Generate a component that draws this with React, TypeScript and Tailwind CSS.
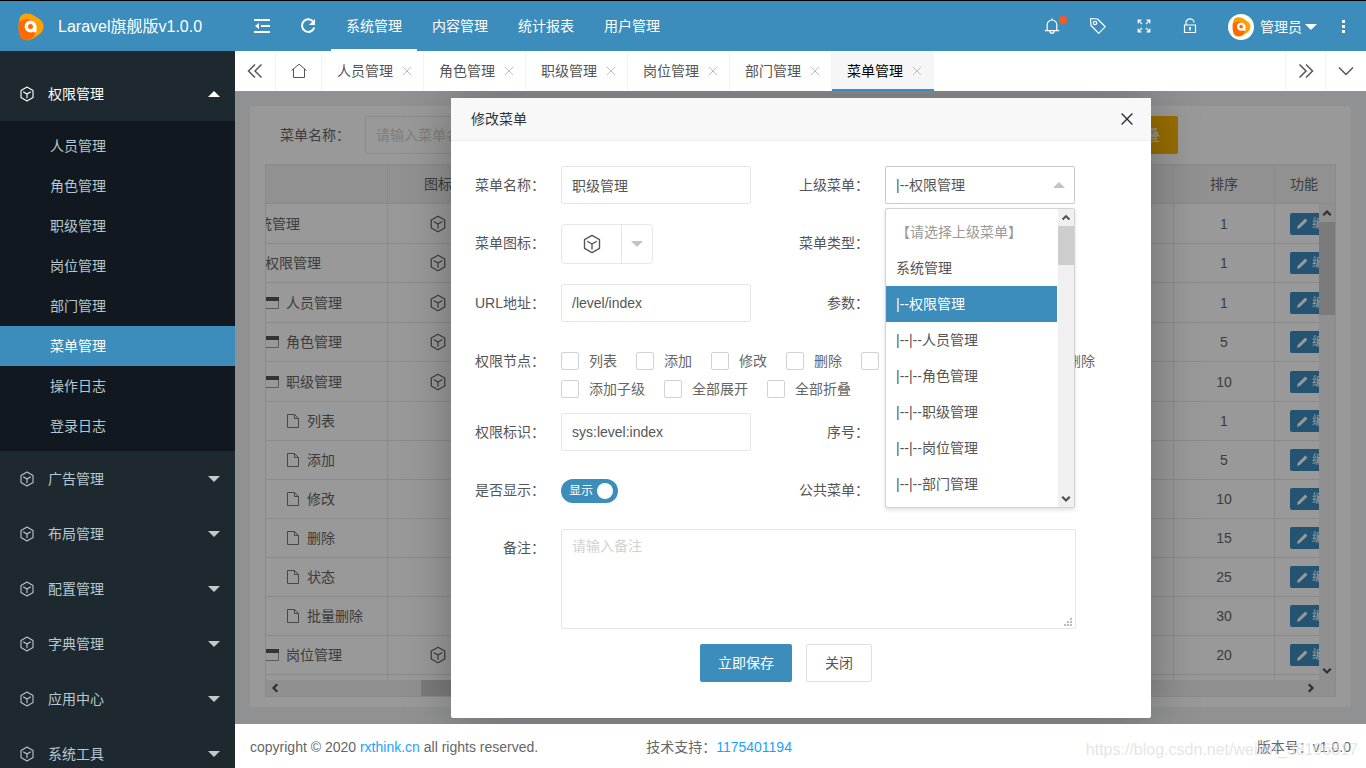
import { useState } from "react";
import type { ReactNode } from "react";

type MenuRow = {
  name: string;
  level: number;
  sort: number;
  icon?: boolean;
};

const topMenus = ["系统管理", "内容管理", "统计报表", "用户管理"];
const subMenus = ["人员管理", "角色管理", "职级管理", "岗位管理", "部门管理", "菜单管理", "操作日志", "登录日志"];
const sideMenus = ["广告管理", "布局管理", "配置管理", "字典管理", "应用中心", "系统工具"];
const tabs = ["人员管理", "角色管理", "职级管理", "岗位管理", "部门管理", "菜单管理"];

const rows: MenuRow[] = [
  { name: "系统管理", level: 0, sort: 1, icon: true },
  { name: "权限管理", level: 1, sort: 1, icon: true },
  { name: "人员管理", level: 2, sort: 1, icon: true },
  { name: "角色管理", level: 2, sort: 5, icon: true },
  { name: "职级管理", level: 2, sort: 10, icon: true },
  { name: "列表", level: 3, sort: 1 },
  { name: "添加", level: 3, sort: 5 },
  { name: "修改", level: 3, sort: 10 },
  { name: "删除", level: 3, sort: 15 },
  { name: "状态", level: 3, sort: 25 },
  { name: "批量删除", level: 3, sort: 30 },
  { name: "岗位管理", level: 2, sort: 20, icon: true },
  { name: "列表", level: 3, sort: 1 },
];

const indents = ["pl-[21px]", "pl-[42px]", "pl-[63px]", "pl-[84px]"];

const nodes = ["列表", "添加", "修改", "删除", "状态", "查看", "批量删除", "添加子级", "全部展开", "全部折叠"];

const parents = [
  "【请选择上级菜单】",
  "系统管理",
  "|--权限管理",
  "|--|--人员管理",
  "|--|--角色管理",
  "|--|--职级管理",
  "|--|--岗位管理",
  "|--|--部门管理",
];

const inputClass = "h-[38px] w-full rounded-xs border border-[#e6e6e6] bg-white px-[10px] text-[#555] outline-none placeholder:text-[#d2d2d2]";

function CubeIcon({ className }: { className: string }) {
  return (
    <svg viewBox="0 0 16 16" className={className} fill="none" stroke="currentColor" strokeWidth="1.1">
      <path d="M8 1.1 14 4.500v7L8 14.900 2 11.500v-7z" strokeLinejoin="round" />
      <path d="M4.200 5.800 8 8l3.800-2.200M8 8v4.300" />
    </svg>
  );
}

function Caret({ className, up }: { className: string; up?: boolean }) {
  return (
    <svg viewBox="0 0 12 6" className={className} fill="currentColor">
      <path d={up ? "M0 6 6 0l6 6z" : "M0 0h12L6 6z"} />
    </svg>
  );
}

function Chevron({ className, d }: { className: string; d: string }) {
  return (
    <svg viewBox="0 0 16 16" className={className} fill="none" stroke="currentColor">
      <path d={d} />
    </svg>
  );
}

function Logo({ className }: { className: string }) {
  return (
    <svg viewBox="0 0 26 28" className={className}>
      <path d="M3 2.500C7-.5 12 0 16 2.500l6 4c4 3 4.500 8 2 12-2.500 3.500-6 5-9 7-4 2.500-9 2.500-12-1C-.5 20 0 7 3 2.500z" fill="#ffa200" />
      <path d="M1 9c4-3 10-4 14-1 5 4 4 12-1 17.500-4 2.500-8.500 2-11-1C.5 21 .5 14 1 9z" fill="#ff6a00" />
      <circle cx="12.500" cy="13.500" r="4.200" fill="none" stroke="#fff" strokeWidth="3.400" />
      <path d="M15.500 13h3v6.300h-3z" fill="#fff" />
    </svg>
  );
}

function FileIcon() {
  return (
    <svg viewBox="0 0 14 16" className="h-4 w-[14px]" fill="none" stroke="#777">
      <path d="M1.500 1.500h7l4 4v9h-11z" />
      <path d="M8.500 1.500v4h4" />
    </svg>
  );
}

function WindowIcon() {
  return (
    <svg viewBox="0 0 14 12" className="h-3 w-[14px]">
      <path d="M.5.500h13v11H.5z" fill="none" stroke="#999" />
      <path d="M0 0h14v4H0z" fill="#555" />
    </svg>
  );
}

function Field({ label, htmlFor, children }: { label: string; htmlFor: string; children: ReactNode }) {
  return (
    <>
      <label htmlFor={htmlFor} className="pr-4 text-right leading-[38px]">
        {label}：
      </label>
      <div className="relative">{children}</div>
    </>
  );
}

function Switch({ id }: { id: string }) {
  return (
    <div className="flex h-10 items-center">
      <label htmlFor={id} className="flex h-6 w-[57px] cursor-pointer items-center justify-between rounded-full bg-[#3c8dbc] pr-[5px] pl-2 text-xs text-white">
        <input id={id} type="checkbox" defaultChecked className="sr-only" />
        显示
        <span className="size-4 rounded-full bg-white" />
      </label>
    </div>
  );
}

function Header() {
  return (
    <header className="flex h-[51px] shrink-0 border-t border-black bg-[#3c8dbc] text-sm text-white">
      <a href="#" className="flex w-[235px] items-center gap-[14px] pt-[2px] pl-[18px] text-base">
        <Logo className="h-[28px] w-[26px]" />
        <span>Laravel旗舰版v1.0.0</span>
      </a>
      <button aria-label="折叠菜单" className="flex w-[54px] items-center justify-center">
        <svg viewBox="0 0 16 14" className="h-[14px] w-4" fill="none" stroke="#fff" strokeWidth="2">
          <path d="M0 1h16M7 7h9M0 13h16" />
          <path d="M5 4v6L1 7z" fill="#fff" stroke="none" />
        </svg>
      </button>
      <button aria-label="刷新" className="mr-[4px] flex w-[38px] items-center justify-center">
        <svg viewBox="0 0 16 16" className="size-4" fill="none" stroke="#fff" strokeWidth="2">
          <path d="M13.500 4A6.300 6.300 0 1 0 14.300 9.500" />
          <path d="M15 1v6H9z" fill="#fff" stroke="none" />
        </svg>
      </button>
      <nav className="flex">
        {topMenus.map((name, i) => (
          <a
            key={name}
            href="#"
            className={
              i === 0
                ? "flex items-center border-b-2 border-white px-[15px] pt-[2px]"
                : "flex items-center border-b-2 border-transparent px-[15px] pt-[2px]"
            }
          >
            {name}
          </a>
        ))}
      </nav>
      <div className="ml-auto flex">
        <button aria-label="消息" className="relative flex w-[46px] items-center justify-center">
          <svg viewBox="0 0 16 16" className="size-4" fill="none" stroke="#fff" strokeWidth="1.200">
            <path d="M3.200 12.500V6.800a4.800 4.800 0 0 1 9.600 0v5.700M.8 12.600h14.400M6 13.200a2 2 0 0 0 4 0M8 .6V2" />
          </svg>
          <span className="absolute top-[15px] right-2 size-2 rounded-full bg-[#ff5722]" />
        </button>
        <button aria-label="便签" className="flex w-[46px] items-center justify-center">
          <svg viewBox="0 0 18 18" className="size-[18px]" fill="none" stroke="#fff" strokeWidth="1.200">
            <path d="M1.500 2.500Q1.500 1.500 2.500 1.500L8.500 2l7.800 7.700-6.600 6.600L2 8.500z" strokeLinejoin="round" />
            <circle cx="6" cy="6" r="1.700" />
          </svg>
        </button>
        <button aria-label="全屏" className="flex w-[46px] items-center justify-center">
          <svg viewBox="0 0 14 14" className="size-[14px]" fill="none" stroke="#fff" strokeWidth="1.200">
            <path d="M1.200 4.500V1.200h3.300M1.200 1.200l3.800 3.800M9.500 1.200h3.300v3.300M12.800 1.200 9 5M1.200 9.500v3.300h3.300M1.200 12.800 5 9M12.800 9.500v3.300H9.500M12.800 12.800 9 9" />
          </svg>
        </button>
        <button aria-label="锁屏" className="flex w-[46px] items-center justify-center">
          <svg viewBox="0 0 14 16" className="h-4 w-[14px]" fill="none" stroke="#fff" strokeWidth="1.200">
            <path d="M1.500 7h11v7.500h-11zM3 7V4.500a4 3.600 0 0 1 8 0" />
            <path d="M7 9v3.500M6 9.800h2" strokeWidth="1.600" />
          </svg>
        </button>
        <button className="flex w-[107px] items-center pt-[2px] pl-[15px]">
          <span className="flex size-[26px] items-center justify-center rounded-full bg-white">
            <Logo className="h-5 w-[19px]" />
          </span>
          <span className="ml-[6px]">管理员</span>
          <Caret className="ml-[3px] h-[6px] w-3" />
        </button>
        <button aria-label="更多" className="flex w-[46px] items-center justify-center">
          <svg viewBox="0 0 3 13" className="h-[13px] w-[3px]" fill="#fff">
            <path d="M0 0h3v3H0zM0 5h3v3H0zM0 10h3v3H0z" />
          </svg>
        </button>
      </div>
    </header>
  );
}

function Sidebar() {
  return (
    <aside className="w-[235px] shrink-0 overflow-hidden bg-[#1e292f] pt-[15px] text-sm text-[#b8c7ce]">
      <a href="#" className="flex h-[55px] items-center pr-[15px] pl-[19px] text-white">
        <CubeIcon className="size-4" />
        <span className="ml-[13px] flex-1">权限管理</span>
        <Caret up className="h-[6px] w-3" />
      </a>
      <ul className="bg-[#11181f] py-[5px]">
        {subMenus.map((name) => (
          <li key={name}>
            <a
              href="#"
              className={name === "菜单管理" ? "block bg-[#3c8dbc] pl-[50px] leading-10 text-white" : "block pl-[50px] leading-10"}
            >
              {name}
            </a>
          </li>
        ))}
      </ul>
      {sideMenus.map((name) => (
        <a key={name} href="#" className="flex h-[55px] items-center pr-[15px] pl-[19px]">
          <CubeIcon className="size-4" />
          <span className="ml-[13px] flex-1">{name}</span>
          <Caret className="h-[6px] w-3 text-[#c4cacc]" />
        </a>
      ))}
    </aside>
  );
}

function TabBar() {
  return (
    <div className="flex h-10 shrink-0 bg-white text-sm text-[#555]">
      <button aria-label="向左滚动" className="flex w-[41px] items-center justify-center border-r border-[#f3f3f3]">
        <Chevron className="size-4 stroke-[1.5]" d="M8 1.500 1.500 8 8 14.500M14.500 1.500 8 8l6.500 6.500" />
      </button>
      <button aria-label="首页" className="flex w-[46px] items-center justify-center border-r border-[#f3f3f3]">
        <Chevron className="size-4" d="M.5 7.500 8 1.200l7.500 6.300M2.500 6v8.500h11V6" />
      </button>
      {tabs.map((name) => (
        <div
          key={name}
          className={
            name === "菜单管理"
              ? "flex w-[102px] items-center border-b-2 border-[#3c8dbc] bg-[#f6f6f6] pt-[2px] pl-[15px] text-black"
              : "flex w-[102px] items-center border-r border-[#f3f3f3] pl-[15px]"
          }
        >
          <a href="#">{name}</a>
          <button aria-label={`关闭${name}`} className="ml-[9px] text-[#bbb]">
            <Chevron className="size-[10px] stroke-[1.5]" d="M1.500 1.500l13 13M14.500 1.500l-13 13" />
          </button>
        </div>
      ))}
      <button aria-label="向右滚动" className="ml-auto flex w-[41px] items-center justify-center border-x border-[#f3f3f3]">
        <Chevron className="size-4 stroke-[1.5]" d="M1.500 1.500 8 8l-6.500 6.500M8 1.500 14.500 8 8 14.500" />
      </button>
      <button aria-label="页签操作" className="flex w-10 items-center justify-center">
        <Chevron className="size-4 stroke-[1.5]" d="M1 4.500l7 7 7-7" />
      </button>
    </div>
  );
}

function MenuTable() {
  const cell = "border-r border-b border-[#e6e6e6]";
  return (
    <div className="flex min-h-0 flex-1 flex-col border border-[#e6e6e6]">
      <div className="flex min-h-0 flex-1">
        <div className="min-w-0 flex-1 overflow-hidden">
          <table className="-ml-16 w-[calc(100%+220px)] table-fixed border-separate border-spacing-0 text-sm">
            <thead>
              <tr className="h-[39px] bg-[#f2f2f2]">
                <th className={`w-[186px] ${cell}`} />
                <th className={`w-[101px] font-normal ${cell}`}>图标</th>
                <th className={cell} />
                <th className={`w-[101px] font-normal ${cell}`}>公共菜单</th>
                <th className={`w-[101px] font-normal ${cell}`}>排序</th>
                <th className={`w-[200px] pl-[15px] text-left font-normal ${cell}`}>功能操作</th>
              </tr>
            </thead>
            <tbody>
              {rows.map((row, i) => (
                <tr key={i} className={row.icon && i % 2 === 0 ? "h-10" : "h-[39px]"}>
                  <td className={`p-0 ${indents[row.level]} ${cell}`}>
                    <div className="flex items-center">
                      <span className="flex w-[21px]">
                        {row.level === 3 ? <FileIcon /> : <WindowIcon />}
                      </span>
                      {row.name}
                    </div>
                  </td>
                  <td className={`p-0 ${cell}`}>{row.icon && <CubeIcon className="mx-auto size-[18px]" />}</td>
                  <td className={cell} />
                  <td className={cell} />
                  <td className={`p-0 text-center ${cell}`}>{row.sort}</td>
                  <td className={`p-0 pl-[15px] ${cell}`}>
                    <button className="flex h-[22px] items-center gap-1 rounded-xs bg-[#3c8dbc] px-[7px] text-xs text-white">
                      <svg viewBox="0 0 10 10" className="size-[11px]" fill="#fff">
                        <path d="M0 10l.6-2.800L7.500.500l2 2L2.600 9.200z" />
                      </svg>
                      编辑
                    </button>
                  </td>
                </tr>
              ))}
            </tbody>
          </table>
        </div>
        <div className="flex w-4 flex-col items-center bg-[#f0f0f0] text-[#505050]">
          <div className="h-[39px] w-full shrink-0 border-b border-[#e6e6e6] bg-[#f2f2f2]" />
          <Chevron className="my-[3px] h-3 w-3 stroke-3" d="M3 11l5-5 5 5" />
          <div className="h-[93px] w-full bg-[#cdcdcd]" />
          <Chevron className="mt-auto mb-[3px] h-3 w-3 stroke-3" d="M3 5l5 5 5-5" />
        </div>
      </div>
      <div className="flex h-4 shrink-0 items-center bg-[#f0f0f0] pr-[18px] pl-[3px] text-[#505050]">
        <Chevron className="size-3 stroke-3" d="M11 3 6 8l5 5" />
        <div className="ml-[140px] h-full w-[500px] bg-[#cdcdcd]" />
        <Chevron className="ml-auto size-3 stroke-3" d="M5 3l5 5-5 5" />
      </div>
    </div>
  );
}

function MenuPage() {
  return (
    <div className="flex h-full flex-col px-[15px] pt-[15px] pb-[17px]">
      <div className="flex min-h-0 flex-1 flex-col gap-[10px] rounded-xs bg-white px-[15px] py-[10px]">
        <div className="flex items-center justify-between pr-[158px] pl-[15px]">
          <div className="flex items-center">
            <label htmlFor="keyword" className="pr-[15px]">
              菜单名称：
            </label>
            <div className="w-[190px]">
              <input id="keyword" placeholder="请输入菜单名称" className={inputClass} />
            </div>
          </div>
          <button className="h-[38px] rounded-xs bg-[#ffb800] px-[18px] text-white">全部折叠</button>
        </div>
        <MenuTable />
      </div>
    </div>
  );
}

function ParentSelect() {
  const [selected, setSelected] = useState("|--权限管理");

  return (
    <>
      <select
        id="parent"
        value={selected}
        onChange={(e) => setSelected(e.target.value)}
        className="h-[38px] w-full appearance-none rounded-xs border border-[#c9c9c9] bg-white px-[10px] text-[#555] outline-none"
      >
        {parents.map((name) => (
          <option key={name}>{name}</option>
        ))}
      </select>
      <Caret up className="pointer-events-none absolute top-4 right-[10px] h-[6px] w-3 text-[#c2c2c2]" />
      <div className="absolute top-[42px] left-0 z-10 flex h-[300px] w-full rounded-xs border border-[#d2d2d2] bg-white shadow-[0_2px_4px_rgba(0,0,0,0.12)]">
        <ul role="listbox" className="min-w-0 flex-1 overflow-hidden py-[5px]">
          {parents.map((name, i) => (
            <li
              key={name}
              role="option"
              aria-selected={name === selected}
              onClick={() => setSelected(name)}
              className={
                name === selected
                  ? "bg-[#3c8dbc] px-[10px] leading-9 text-white"
                  : i === 0
                    ? "px-[10px] leading-9 text-[#999]"
                    : "px-[10px] leading-9"
              }
            >
              {name}
            </li>
          ))}
        </ul>
        <div className="flex w-[17px] flex-col items-center border-l border-white bg-[#f0f0f0] text-[#505050]">
          <Chevron className="my-[3px] h-[11px] w-3 stroke-3" d="M3 11l5-5 5 5" />
          <div className="h-[39px] w-full bg-[#cdcdcd]" />
          <Chevron className="mt-auto mb-[2px] h-3 w-3 stroke-3" d="M3 5l5 5 5-5" />
        </div>
      </div>
    </>
  );
}

function EditDialog() {
  return (
    <div role="dialog" aria-label="修改菜单" className="flex h-[620px] w-[700px] flex-col rounded-xs bg-white text-sm text-[#555] shadow-[1px_1px_50px_rgba(0,0,0,0.3)]">
      <div className="flex h-[43px] items-center justify-between border-b border-[#eee] bg-[#f8f8f8] pr-[18px] pl-5">
        <h2 className="text-[#333]">修改菜单</h2>
        <button aria-label="关闭窗口" className="text-[#2e2d3c]">
          <Chevron className="size-3 stroke-[1.8]" d="M.8.800l14.400 14.400M15.200.800.800 15.200" />
        </button>
      </div>
      <form className="pt-[25px] pr-[30px]" onSubmit={(e) => e.preventDefault()}>
        <div className="grid grid-cols-[110px_190px_134px_190px] gap-y-5">
          <Field label="菜单名称" htmlFor="name">
            <input id="name" defaultValue="职级管理" className={inputClass} />
          </Field>
          <Field label="上级菜单" htmlFor="parent">
            <ParentSelect />
          </Field>
          <Field label="菜单图标" htmlFor="icon">
            <button id="icon" type="button" aria-label="选择图标" className="flex h-10 w-[92px] items-center rounded-sm border border-[#e6e6e6]">
              <span className="flex h-full w-[60px] items-center justify-center border-r border-[#e6e6e6]">
                <CubeIcon className="size-5" />
              </span>
              <Caret className="mx-auto h-[6px] w-3 text-[#c2c2c2]" />
            </button>
          </Field>
          <Field label="菜单类型" htmlFor="type">
            <select id="type" className={inputClass} />
          </Field>
          <Field label="URL地址" htmlFor="url">
            <input id="url" defaultValue="/level/index" className={inputClass} />
          </Field>
          <Field label="参数" htmlFor="param">
            <input id="param" className={inputClass} />
          </Field>
        </div>
        <fieldset className="mt-5 mb-[10px] flex">
          <legend className="float-left w-[110px] shrink-0 pr-4 text-right leading-[38px]">权限节点：</legend>
          <div className="flex flex-wrap gap-x-[19px] pt-[5px]">
            {nodes.map((name) => (
              <label key={name} className="flex h-7 items-center gap-[10px] text-[#666]">
                <input type="checkbox" className="size-[18px] appearance-none rounded-xs border border-[#d2d2d2] bg-white" />
                {name}
              </label>
            ))}
          </div>
        </fieldset>
        <div className="grid grid-cols-[110px_190px_134px_190px]">
          <Field label="权限标识" htmlFor="permission">
            <input id="permission" defaultValue="sys:level:index" className={inputClass} />
          </Field>
          <Field label="序号" htmlFor="sort">
            <input id="sort" className={inputClass} />
          </Field>
        </div>
        <div className="mt-5 grid grid-cols-[110px_190px_134px_190px]">
          <Field label="是否显示" htmlFor="status">
            <Switch id="status" />
          </Field>
          <Field label="公共菜单" htmlFor="public">
            <Switch id="public" />
          </Field>
        </div>
        <div className="mt-[18px] grid grid-cols-[110px_515px]">
          <Field label="备注" htmlFor="note">
            <textarea
              id="note"
              placeholder="请输入备注"
              className="block h-[100px] w-full resize-none rounded-xs border border-[#e6e6e6] px-[10px] py-[6px] leading-5 outline-none placeholder:text-[#d2d2d2]"
            />
            <svg viewBox="0 0 8 8" className="absolute right-1 bottom-[3px] size-2" fill="#bbb">
              <path d="M0 6h2v2H0zM3 6h2v2H3zM6 6h2v2H6zM3 3h2v2H3zM6 3h2v2H6zM6 0h2v2H6z" />
            </svg>
          </Field>
        </div>
        <div className="mt-[15px] flex justify-center gap-[14px]">
          <button className="h-[38px] rounded-xs bg-[#3c8dbc] px-[18px] text-white">立即保存</button>
          <button type="button" className="h-[38px] rounded-xs border border-[#e0e0e0] bg-white px-[18px]">
            关闭
          </button>
        </div>
      </form>
    </div>
  );
}

export default function App() {
  return (
    <div className="flex h-screen flex-col overflow-hidden font-['Liberation_Sans','Noto_Sans_CJK_SC',sans-serif] text-sm">
      <Header />
      <div className="flex min-h-0 flex-1">
        <Sidebar />
        <div className="flex min-w-0 flex-1 flex-col">
          <TabBar />
          <main className="relative min-h-0 flex-1 overflow-hidden bg-[#f0f2f5] text-[#666]">
            <MenuPage />
            <div className="absolute inset-0 flex items-center justify-center bg-black/40 pt-px pl-px">
              <EditDialog />
            </div>
          </main>
          <footer className="relative flex h-11 shrink-0 items-center bg-white px-[15px] pt-[2px] text-[#666]">
            <p>
              copyright © 2020 <a href="#" className="text-[#1e9fff]">rxthink.cn</a> all rights reserved.
            </p>
            <p className="ml-[108px]">
              技术支持：<a href="#" className="text-[#1e9fff]">1175401194</a>
            </p>
            <p className="ml-auto">版本号：v1.0.0</p>
            <span className="absolute right-2 bottom-[6px] text-base text-[#dedede]/80">https://blog.csdn.net/weixin_38196817</span>
          </footer>
        </div>
      </div>
    </div>
  );
}
